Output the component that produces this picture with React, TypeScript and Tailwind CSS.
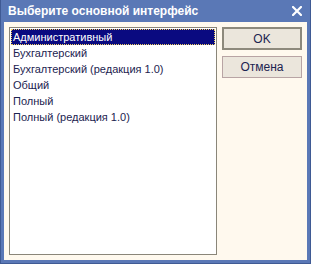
import { useState } from 'react';

const items = [
  'Административный',
  'Бухгалтерский',
  'Бухгалтерский (редакция 1.0)',
  'Общий',
  'Полный',
  'Полный (редакция 1.0)',
];

export default function App() {
  const [selected, setSelected] = useState(0);

  return (
    <div
      className="w-[311px] h-[264px] flex flex-col bg-[#5a78b6] border-l border-r border-b border-[#3f5a94]"
      style={{ fontFamily: '"Liberation Sans", Arial, sans-serif' }}
    >
      {/* Title bar */}
      <div className="h-[22px] shrink-0 flex items-center justify-between pl-[7px] pr-[8px]">
        <span className="text-white font-bold text-[12px] leading-none">Выберите основной интерфейс</span>
        <svg width="10" height="10" viewBox="0 0 10 10" className="text-white">
          <path d="M1 1 L9 9 M9 1 L1 9" stroke="currentColor" strokeWidth="2.2" strokeLinecap="square" />
        </svg>
      </div>

      {/* Client area */}
      <div className="flex-1 mx-[3px] mb-[3px] bg-[#fff9ee] flex gap-[5px] p-[5px]">
        <div className="w-[208px] bg-white border border-[#8a8679] py-[1px] px-[1px]">
          {items.map((item, i) => (
            <div
              key={item}
              onClick={() => setSelected(i)}
              className={
                i === selected
                  ? 'h-[16px] flex items-center px-[2px] text-[11px] text-white bg-[#0a0a80] outline-1 outline-dotted outline-[#f0d060] -outline-offset-1'
                  : 'h-[16px] flex items-center px-[2px] text-[11px] text-[#1c2350]'
              }
            >
              {item}
            </div>
          ))}
        </div>

        <div className="flex flex-col gap-[6px]">
          <button className="w-[80px] h-[23px] bg-[#ebe6dc] border-2 border-[#8d897c] text-[12px] text-[#1c2350]">
            OK
          </button>
          <button className="w-[80px] h-[22px] bg-[#ebe6dc] border border-[#b8a4a4] text-[12px] text-[#1c2350]">
            Отмена
          </button>
        </div>
      </div>
    </div>
  );
}
